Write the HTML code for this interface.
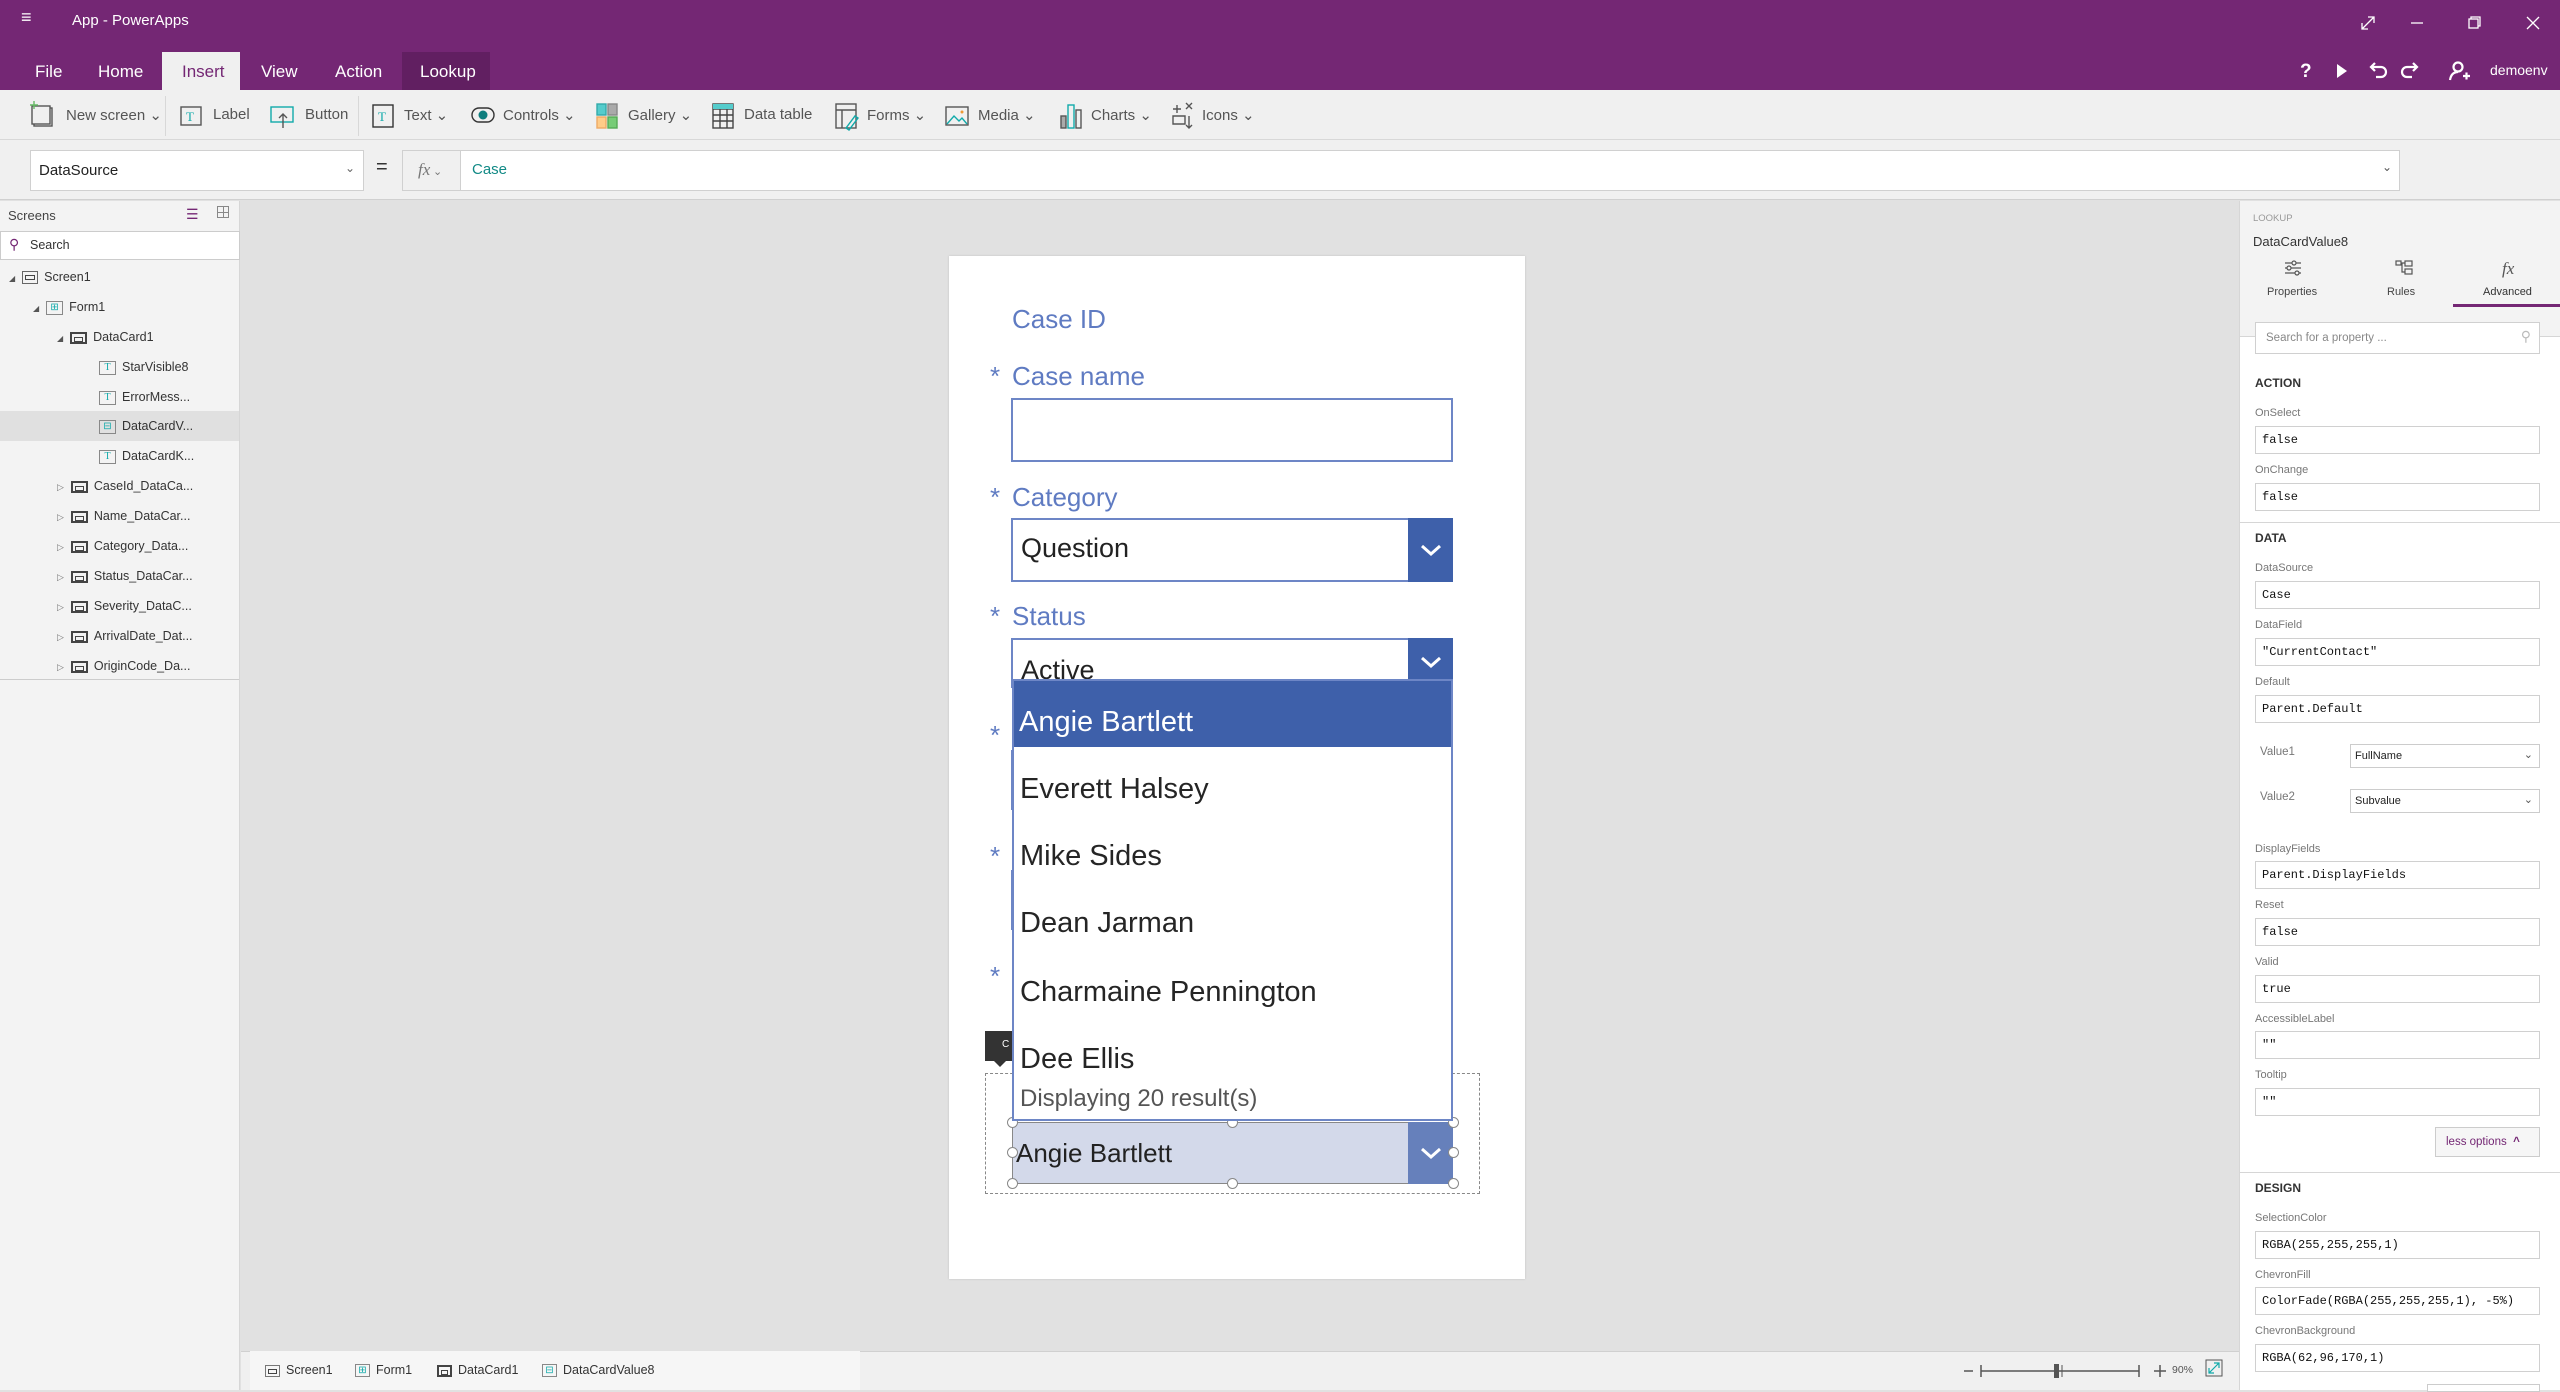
<!DOCTYPE html>
<html><head><meta charset="utf-8">
<style>
*{margin:0;padding:0;box-sizing:border-box}
body{width:2560px;height:1390px;overflow:hidden;font-family:"Liberation Sans",sans-serif;background:#e1e1e1;position:relative;color:#333}
.a{position:absolute;white-space:nowrap}
.top{left:0;top:0;width:2560px;height:90px;background:#742774}
.tab{color:#fff;font-size:17px;top:62px}
.tb{top:90px;left:0;width:2560px;height:50px;background:#f0f0f0;border-bottom:1px solid #d8d8d8}
.ti{top:106px;font-size:15px;color:#555}
.fr{top:140px;left:0;width:2560px;height:60px;background:#f0f0f0;border-bottom:1px solid #d0d0d0}
.lp{left:0;top:201px;width:240px;height:1189px;background:#f3f3f3;border-right:1px solid #d6d6d6}
.tr{font-size:12.5px;color:#333;height:30px;line-height:30px}
.ico{display:inline-block;width:17px;height:12px;border:2px solid #444;vertical-align:middle;margin-right:6px;position:relative}
.ico:after{content:"";position:absolute;left:2px;right:2px;top:3px;height:3px;border:1px solid #444}
.tic{display:inline-block;width:17px;height:14px;border:1px solid #888;vertical-align:middle;margin-right:6px;font-size:10px;line-height:12px;text-align:center;color:#1aa;font-family:"Liberation Serif",serif}
.lbl{font-size:26px;color:#5f7bc2}
.star{font-size:26px;color:#5f7bc2}
.rp{left:2239px;top:201px;width:321px;height:1189px;background:#fff;border-left:1px solid #d6d6d6}
.pl{font-size:11px;color:#777;left:2255px}
.pb{left:2255px;width:285px;height:28px;border:1px solid #d0d0d0;background:#fff;font-family:"Liberation Mono",monospace;font-size:12px;color:#111;padding:6px 0 0 6px}
.sec{font-size:12px;color:#333;left:2255px;font-weight:bold}
.dd{font-size:29px;color:#252525;left:1020px}
.h{position:absolute;width:11px;height:11px;border:1px solid #888;border-radius:50%;background:#fff}
</style></head><body>
<div class="a top"></div>
<div class="a" style="left:21px;top:14px;color:#fff;font-size:18px;line-height:6px">≡</div>
<div class="a" style="left:72px;top:12px;color:#fff;font-size:15px">App - PowerApps</div>
<div class="a" style="left:162px;top:52px;width:78px;height:38px;background:#f0f0f0"></div>
<div class="a" style="left:402px;top:52px;width:88px;height:38px;background:#611f61"></div>
<div class="a tab" style="left:35px">File</div>
<div class="a tab" style="left:98px">Home</div>
<div class="a tab" style="left:182px;color:#742774">Insert</div>
<div class="a tab" style="left:261px">View</div>
<div class="a tab" style="left:335px">Action</div>
<div class="a tab" style="left:420px">Lookup</div>
<svg class="a" style="left:2340px;top:8px" width="220" height="30" stroke="#fff" fill="none" stroke-width="1.3">
<path d="M22 21l12-12M28 9h6v6M22 15v6h6"/>
<path d="M71 15h12"/>
<rect x="129" y="11" width="9" height="9"/><path d="M131 11v-2h9v9h-2"/>
<path d="M187 9l12 12M199 9l-12 12"/>
</svg>
<svg class="a" style="left:2295px;top:58px" width="180" height="26" fill="none" stroke="#fff" stroke-width="2.2">
<text x="5" y="19" fill="#fff" stroke="none" font-size="19" font-weight="bold" font-family="Liberation Sans">?</text>
<path d="M42 6l10 7-10 7z" fill="#fff" stroke="none"/>
<path d="M76 9h10a5 5 0 0 1 0 10h-5M80 5l-4 4 4 4"/>
<path d="M122 9h-10a5 5 0 0 0 0 10h5M118 5l4 4-4 4"/>
<circle cx="163" cy="9" r="4.5"/><path d="M155 22c1-6 4-8 8-8M168 18h7M171.5 14.5v7"/>
</svg>
<div class="a" style="left:2490px;top:62px;color:#fff;font-size:14px">demoenv</div>
<div class="a tb"></div>
<div class="a" style="left:165px;top:96px;width:1px;height:40px;background:#d8d8d8"></div>
<div class="a" style="left:358px;top:96px;width:1px;height:40px;background:#d8d8d8"></div>
<svg class="a" style="left:30px;top:100px" width="1230" height="32" fill="none" stroke-width="1.4">
<rect x="4" y="8" width="18" height="18" stroke="#555"/><rect x="2" y="6" width="18" height="18" stroke="#555" fill="#f0f0f0"/><path d="M4 1v8M0 5h8" stroke="#6b6"/>
<rect x="151" y="7" width="20" height="18" stroke="#555"/><text x="156" y="21" font-size="13" fill="#1aa" stroke="none" font-family="Liberation Serif">T</text>
<rect x="241" y="7" width="22" height="15" stroke="#1aa"/><path d="M253 28v-14M249 18l4-4 4 4" stroke="#555"/>
<rect x="343" y="5" width="20" height="22" stroke="#333"/><text x="348" y="21" font-size="13" fill="#1aa" stroke="none" font-family="Liberation Serif">T</text>
<rect x="442" y="8" width="22" height="14" rx="7" stroke="#333"/><circle cx="453" cy="15" r="4.5" fill="#0e7e7e" stroke="none"/>
<rect x="567" y="4" width="9" height="11" fill="#5cc" stroke="#3aa"/><rect x="578" y="4" width="9" height="11" fill="#aaa" stroke="#888"/><rect x="567" y="17" width="9" height="11" fill="#fc8" stroke="#ea6"/><rect x="578" y="17" width="9" height="11" fill="#7c7" stroke="#5a5"/>
<rect x="683" y="4" width="20" height="24" stroke="#444"/><path d="M683 9h20M683 15h20M683 21h20M690 4v24M697 4v24" stroke="#444"/><rect x="683" y="4" width="20" height="5" fill="#5cc" stroke="none"/>
<rect x="806" y="4" width="20" height="24" stroke="#555"/><path d="M806 10h20M812 10v18" stroke="#555"/><path d="M816 28l9-12 3 2-9 12z" stroke="#1aa"/>
<rect x="916" y="7" width="22" height="18" stroke="#555"/><path d="M917 24l7-8 5 5 3-3 5 6" stroke="#1aa"/><circle cx="932" cy="12" r="1.5" fill="#e93" stroke="none"/>
<rect x="1031" y="16" width="5" height="12" fill="#aaa" stroke="#555"/><rect x="1038" y="5" width="6" height="23" stroke="#1aa"/><rect x="1046" y="10" width="5" height="18" stroke="#555"/>
<path d="M1147 5v8M1143 9h8M1156 3l6 6M1162 3l-6 6M1143 16h12v8h-12zM1159 16v12M1156 25l3 3 3-3" stroke="#555"/>
</svg>
<div class="a ti" style="left:66px">New screen ⌄</div>
<div class="a ti" style="left:213px">Label</div>
<div class="a ti" style="left:305px">Button</div>
<div class="a ti" style="left:404px">Text ⌄</div>
<div class="a ti" style="left:503px">Controls ⌄</div>
<div class="a ti" style="left:628px">Gallery ⌄</div>
<div class="a ti" style="left:744px">Data table</div>
<div class="a ti" style="left:867px">Forms ⌄</div>
<div class="a ti" style="left:978px">Media ⌄</div>
<div class="a ti" style="left:1091px">Charts ⌄</div>
<div class="a ti" style="left:1202px">Icons ⌄</div>
<div class="a fr"></div>
<div class="a" style="left:30px;top:150px;width:334px;height:41px;background:#fff;border:1px solid #d0d0d0;font-size:15px;padding:11px 0 0 8px;color:#222">DataSource<span style="position:absolute;right:8px;top:10px;color:#666;font-size:12px">⌄</span></div>
<div class="a" style="left:376px;top:156px;font-size:20px;color:#333">=</div>
<div class="a" style="left:402px;top:150px;width:1998px;height:41px;background:#fff;border:1px solid #d0d0d0"></div>
<div class="a" style="left:402px;top:150px;width:59px;height:41px;background:#f0f0f0;border:1px solid #d0d0d0;font-family:'Liberation Serif',serif;font-style:italic;color:#777;font-size:17px;padding:9px 0 0 15px">fx<span style="font-style:normal;font-size:11px"> ⌄</span></div>
<div class="a" style="left:472px;top:161px;font-size:15px;color:#128a86">Case</div>
<div class="a" style="left:2382px;top:160px;font-size:12px;color:#555">⌄</div>
<div class="a lp"></div>
<div class="a" style="left:8px;top:208px;font-size:13px;color:#444">Screens</div>
<div class="a" style="left:186px;top:206px;color:#742774;font-size:14px">☰</div>
<div class="a" style="left:217px;top:206px;width:12px;height:12px;border:1px solid #888;background:linear-gradient(#888,#888) 5px 0/1px 12px no-repeat,linear-gradient(#888,#888) 0 5px/12px 1px no-repeat"></div>
<div class="a" style="left:0;top:231px;width:240px;height:29px;background:#fff;border:1px solid #ccc;font-size:12.5px;padding:6px 0 0 29px;color:#333">Search</div>
<div class="a" style="left:9px;top:236px;color:#742774;font-size:14px">⚲</div>
<div class="a" style="left:0;top:411px;width:239px;height:30px;background:#e0e0e0"></div>
<div class="a tr" style="left:9px;top:262px"><span style="font-size:8px;color:#555">◢</span> &nbsp;<span class="ico" style="border-color:#666;width:16px;height:13px;border-width:1.5px"></span>Screen1</div>
<div class="a tr" style="left:33px;top:292px"><span style="font-size:8px;color:#555">◢</span> &nbsp;<span class="tic" style="color:#1aa">⊞</span>Form1</div>
<div class="a tr" style="left:57px;top:322px"><span style="font-size:8px;color:#555">◢</span> &nbsp;<span class="ico"></span>DataCard1</div>
<div class="a tr" style="left:99px;top:352px"><span class="tic">T</span>StarVisible8</div>
<div class="a tr" style="left:99px;top:382px"><span class="tic">T</span>ErrorMess...</div>
<div class="a tr" style="left:99px;top:411px"><span class="tic" style="color:#1aa">⊟</span>DataCardV...</div>
<div class="a tr" style="left:99px;top:441px"><span class="tic">T</span>DataCardK...</div>
<div class="a tr" style="left:57px;top:471px"><span style="font-size:9px;color:#777">▷</span> &nbsp;<span class="ico"></span>CaseId_DataCa...</div>
<div class="a tr" style="left:57px;top:501px"><span style="font-size:9px;color:#777">▷</span> &nbsp;<span class="ico"></span>Name_DataCar...</div>
<div class="a tr" style="left:57px;top:531px"><span style="font-size:9px;color:#777">▷</span> &nbsp;<span class="ico"></span>Category_Data...</div>
<div class="a tr" style="left:57px;top:561px"><span style="font-size:9px;color:#777">▷</span> &nbsp;<span class="ico"></span>Status_DataCar...</div>
<div class="a tr" style="left:57px;top:591px"><span style="font-size:9px;color:#777">▷</span> &nbsp;<span class="ico"></span>Severity_DataC...</div>
<div class="a tr" style="left:57px;top:621px"><span style="font-size:9px;color:#777">▷</span> &nbsp;<span class="ico"></span>ArrivalDate_Dat...</div>
<div class="a tr" style="left:57px;top:651px"><span style="font-size:9px;color:#777">▷</span> &nbsp;<span class="ico"></span>OriginCode_Da...</div>
<div class="a" style="left:0;top:679px;width:239px;height:1px;background:#ccc"></div>
<div class="a" style="left:949px;top:256px;width:576px;height:1023px;background:#fff;box-shadow:0 0 2px rgba(0,0,0,.15)"></div>
<div class="a lbl" style="left:1012px;top:304px">Case ID</div>
<div class="a star" style="left:990px;top:361px">*</div><div class="a lbl" style="left:1012px;top:361px">Case name</div>
<div class="a" style="left:1011px;top:398px;width:442px;height:64px;border:2px solid #6d86c6;background:#fff"></div>
<div class="a star" style="left:990px;top:482px">*</div><div class="a lbl" style="left:1012px;top:482px">Category</div>
<div class="a" style="left:1011px;top:518px;width:442px;height:64px;border:2px solid #6d86c6;background:#fff"></div>
<div class="a" style="left:1408px;top:518px;width:45px;height:64px;background:#3e60aa"></div>
<div class="a" style="left:1021px;top:533px;font-size:27px;color:#222">Question</div>
<div class="a star" style="left:990px;top:601px">*</div><div class="a lbl" style="left:1012px;top:601px">Status</div>
<div class="a" style="left:1011px;top:638px;width:442px;height:50px;border:2px solid #6d86c6;border-bottom:none;background:#fff;overflow:hidden"><div style="position:absolute;left:8px;top:15px;font-size:27px;color:#222">Active</div></div>
<div class="a" style="left:1408px;top:638px;width:45px;height:42px;background:#3e60aa"></div>
<svg class="a" style="left:1408px;top:518px" width="45" height="64"><path d="M14 28l9 8 9-8" stroke="#fff" stroke-width="3" fill="none"/></svg>
<svg class="a" style="left:1408px;top:648px" width="45" height="30"><path d="M14 10l9 8 9-8" stroke="#fff" stroke-width="3" fill="none"/></svg>
<div class="a star" style="left:990px;top:720px">*</div>
<div class="a star" style="left:990px;top:841px">*</div>
<div class="a star" style="left:990px;top:961px">*</div>
<div class="a" style="left:1011px;top:750px;width:2px;height:60px;background:#6d86c6"></div>
<div class="a" style="left:1011px;top:870px;width:2px;height:60px;background:#6d86c6"></div>
<div class="a" style="left:985px;top:1031px;width:30px;height:30px;background:#333"></div>
<div class="a" style="left:992px;top:1059px;width:0;height:0;border-left:8px solid transparent;border-right:8px solid transparent;border-top:8px solid #333"></div>
<div class="a" style="left:1002px;top:1039px;font-size:10px;color:#fff">C</div>
<div class="a" style="left:985px;top:1073px;width:495px;height:121px;border:1px dashed #888"></div>
<div class="a" style="left:1012px;top:1122px;width:441px;height:62px;background:#d3d9ea;border:1px solid #888"></div>
<div class="a" style="left:1408px;top:1122px;width:45px;height:62px;background:#6680bb"></div>
<svg class="a" style="left:1408px;top:1122px" width="45" height="62"><path d="M14 27l9 8 9-8" stroke="#fff" stroke-width="3" fill="none"/></svg>
<div class="a" style="left:1016px;top:1138px;font-size:26px;color:#222">Angie Bartlett</div>
<div class="h" style="left:1007px;top:1117px"></div><div class="h" style="left:1227px;top:1117px"></div><div class="h" style="left:1448px;top:1117px"></div>
<div class="h" style="left:1007px;top:1147px"></div><div class="h" style="left:1448px;top:1147px"></div>
<div class="h" style="left:1007px;top:1178px"></div><div class="h" style="left:1227px;top:1178px"></div><div class="h" style="left:1448px;top:1178px"></div>
<div class="a" style="left:1012px;top:679px;width:441px;height:442px;background:#fff;border:2px solid #6d86c6"></div>
<div class="a" style="left:1014px;top:681px;width:437px;height:66px;background:#3e60aa"></div>
<div class="a dd" style="left:1019px;top:706px;color:#fff">Angie Bartlett</div>
<div class="a dd" style="top:773px">Everett Halsey</div>
<div class="a dd" style="top:840px">Mike Sides</div>
<div class="a dd" style="top:907px">Dean Jarman</div>
<div class="a dd" style="top:976px">Charmaine Pennington</div>
<div class="a dd" style="top:1043px">Dee Ellis</div>
<div class="a" style="left:1020px;top:1085px;font-size:24px;color:#555">Displaying 20 result(s)</div>
<div class="a" style="left:241px;top:1351px;width:1998px;height:39px;background:#f0f0f0;border-top:1px solid #d0d0d0"></div>
<div class="a" style="left:250px;top:1351px;width:610px;height:39px;background:#f6f6f6"></div>
<div class="a" style="left:265px;top:1363px;font-size:12.5px;color:#333"><span class="ico" style="border-color:#777;width:15px;height:12px;border-width:1.5px"></span>Screen1</div>
<div class="a" style="left:355px;top:1363px;font-size:12.5px;color:#333"><span class="tic" style="width:15px;height:13px">⊞</span>Form1</div>
<div class="a" style="left:437px;top:1363px;font-size:12.5px;color:#333"><span class="ico" style="width:15px"></span>DataCard1</div>
<div class="a" style="left:542px;top:1363px;font-size:12.5px;color:#333"><span class="tic" style="width:15px;height:13px">⊟</span>DataCardValue8</div>
<svg class="a" style="left:1955px;top:1358px" width="215" height="26">
<path d="M9 13h9M26 13h158M26 7v12M184 7v12M205 7v12M199 13h12" stroke="#555" stroke-width="1.5"/>
<rect x="99" y="6" width="5" height="14" fill="#555"/><path d="M107 7v12" stroke="#555"/>
</svg>
<div class="a" style="left:2172px;top:1364px;font-size:10.5px;color:#555">90%</div>
<svg class="a" style="left:2205px;top:1358px" width="30" height="24"><rect x="1" y="2" width="16" height="16" fill="none" stroke="#555"/><path d="M4 15l10-10M9 5h5v5M4 10v5h5" stroke="#1aa" fill="none" stroke-width="1.2"/></svg>
<div class="a rp"></div>
<div class="a" style="left:2240px;top:201px;width:320px;height:136px;background:#f3f3f3;border-bottom:1px solid #d6d6d6"></div>
<div class="a" style="left:2253px;top:213px;font-size:9.5px;color:#999">LOOKUP</div>
<div class="a" style="left:2253px;top:234px;font-size:13px;color:#333">DataCardValue8</div>
<svg class="a" style="left:2280px;top:258px" width="250" height="22" fill="none" stroke="#555" stroke-width="1.2">
<path d="M5 5h16M5 10h16M5 15h16"/><circle cx="14" cy="5" r="2" fill="#f3f3f3"/><circle cx="9" cy="10" r="2" fill="#f3f3f3"/><circle cx="17" cy="15" r="2" fill="#f3f3f3"/>
<rect x="116" y="3" width="5" height="4"/><rect x="125" y="3" width="7" height="5"/><rect x="125" y="11" width="7" height="5"/><path d="M121 5h4M122 5v9h3"/>
<text x="222" y="16" fill="#555" stroke="none" font-size="17" font-style="italic" font-family="Liberation Serif">fx</text>
</svg>
<div class="a" style="left:2267px;top:286px;font-size:11px;color:#444">Properties</div>
<div class="a" style="left:2387px;top:286px;font-size:11px;color:#444">Rules</div>
<div class="a" style="left:2483px;top:286px;font-size:11px;color:#333">Advanced</div>
<div class="a" style="left:2453px;top:304px;width:107px;height:3px;background:#742774"></div>
<div class="a" style="left:2255px;top:322px;width:285px;height:32px;background:#fff;border:1px solid #d0d0d0;font-size:11.5px;color:#888;padding:9px 0 0 10px">Search for a property ...<span style="position:absolute;right:8px;top:5px;color:#bbb;font-size:14px">⚲</span></div>
<div class="a sec" style="top:376px">ACTION</div>
<div class="a pl" style="top:407px">OnSelect</div><div class="a pb" style="top:426px">false</div>
<div class="a pl" style="top:464px">OnChange</div><div class="a pb" style="top:483px">false</div>
<div class="a" style="left:2240px;top:522px;width:320px;height:1px;background:#d6d6d6"></div>
<div class="a sec" style="top:531px">DATA</div>
<div class="a pl" style="top:562px">DataSource</div><div class="a pb" style="top:581px">Case</div>
<div class="a pl" style="top:619px">DataField</div><div class="a pb" style="top:638px">"CurrentContact"</div>
<div class="a pl" style="top:676px">Default</div><div class="a pb" style="top:695px">Parent.Default</div>
<div class="a pl" style="left:2260px;top:746px;font-size:11.5px">Value1</div>
<div class="a" style="left:2350px;top:744px;width:190px;height:24px;border:1px solid #ccc;background:#fff;font-size:11px;color:#222;padding:5px 0 0 4px">FullName<span style="position:absolute;right:6px;top:3px;color:#555">⌄</span></div>
<div class="a pl" style="left:2260px;top:791px;font-size:11.5px">Value2</div>
<div class="a" style="left:2350px;top:789px;width:190px;height:24px;border:1px solid #ccc;background:#fff;font-size:11px;color:#222;padding:5px 0 0 4px">Subvalue<span style="position:absolute;right:6px;top:3px;color:#555">⌄</span></div>
<div class="a pl" style="top:843px">DisplayFields</div><div class="a pb" style="top:861px">Parent.DisplayFields</div>
<div class="a pl" style="top:899px">Reset</div><div class="a pb" style="top:918px">false</div>
<div class="a pl" style="top:956px">Valid</div><div class="a pb" style="top:975px">true</div>
<div class="a pl" style="top:1013px">AccessibleLabel</div><div class="a pb" style="top:1031px">""</div>
<div class="a pl" style="top:1069px">Tooltip</div><div class="a pb" style="top:1088px">""</div>
<div class="a" style="left:2435px;top:1127px;width:105px;height:30px;background:#f6f6f6;border:1px solid #ccc;font-size:11.5px;color:#742774;padding:8px 0 0 10px">less options &nbsp;<b>^</b></div>
<div class="a" style="left:2240px;top:1172px;width:320px;height:1px;background:#d6d6d6"></div>
<div class="a sec" style="top:1181px">DESIGN</div>
<div class="a pl" style="top:1212px">SelectionColor</div><div class="a pb" style="top:1231px">RGBA(255,255,255,1)</div>
<div class="a pl" style="top:1269px">ChevronFill</div><div class="a pb" style="top:1287px">ColorFade(RGBA(255,255,255,1), -5%)</div>
<div class="a pl" style="top:1325px">ChevronBackground</div><div class="a pb" style="top:1344px">RGBA(62,96,170,1)</div>
<div class="a" style="left:2427px;top:1384px;width:113px;height:8px;border:1px solid #ccc;background:#fff"></div>
</body></html>
